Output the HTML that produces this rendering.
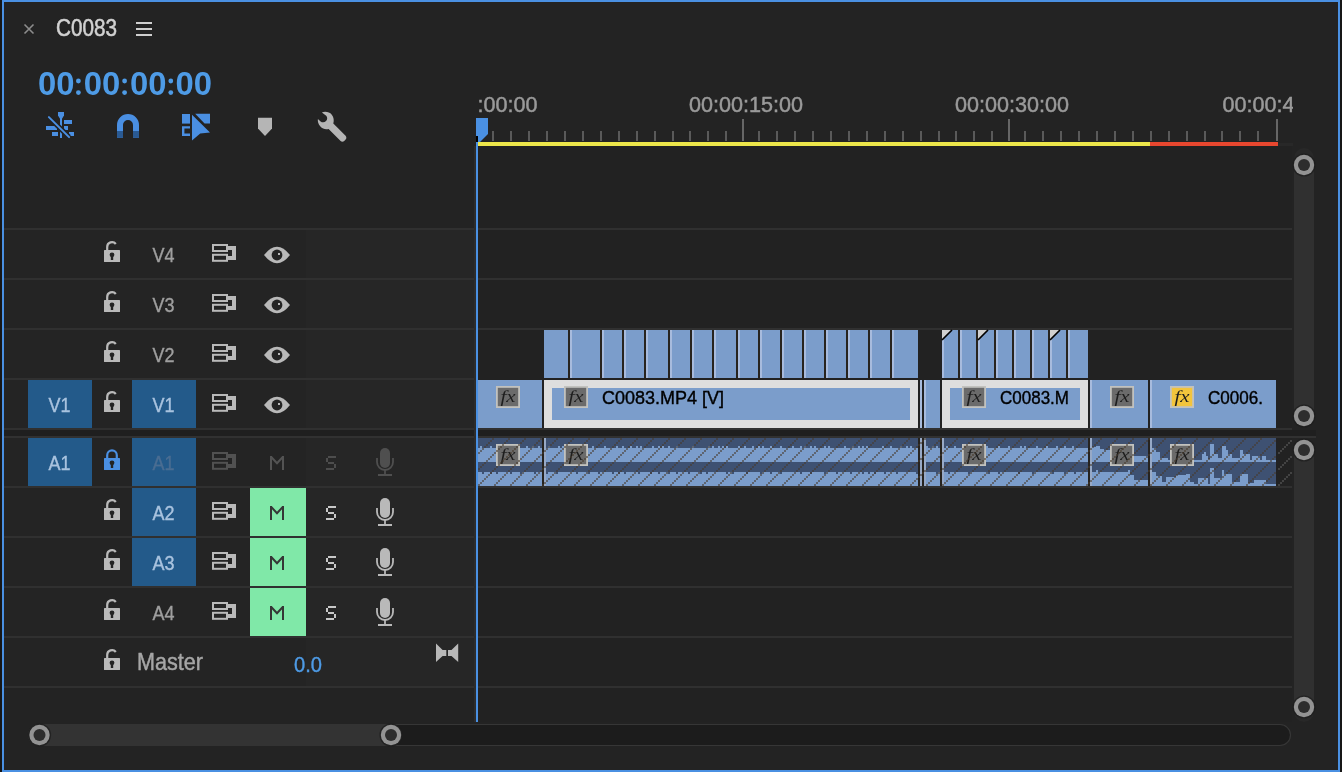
<!DOCTYPE html>
<html><head><meta charset="utf-8"><style>
html,body{margin:0;padding:0;background:#161616;overflow:hidden;}
svg{display:block;font-family:"Liberation Sans", sans-serif;will-change:transform;}
</style></head><body>
<svg width="1342" height="772" viewBox="0 0 1342 772" font-family='"Liberation Sans", sans-serif'>
<rect x="0" y="0" width="1342" height="772" fill="#161616"/>
<rect x="2" y="0" width="1338" height="772" fill="#4a90e2"/>
<rect x="4" y="2" width="1334" height="768" fill="#232323"/>
<path d="M24.5 24.5 L33.5 33.5 M33.5 24.5 L24.5 33.5" stroke="#8c8c8c" stroke-width="1.6"/>
<text x="56" y="36.3" font-size="23.5" fill="#d2d2d2" stroke="#d2d2d2" stroke-width="0.55" textLength="61" lengthAdjust="spacingAndGlyphs">C0083</text>
<rect x="136" y="22" width="16" height="2" fill="#cfcfcf"/>
<rect x="136" y="28" width="16" height="2" fill="#cfcfcf"/>
<rect x="136" y="34" width="16" height="2" fill="#cfcfcf"/>
<text x="37.900000000000006" y="95.4" font-size="32.6" font-weight="bold" fill="#4e9be6" textLength="36.5" lengthAdjust="spacingAndGlyphs">00</text>
<text x="83.8" y="95.4" font-size="32.6" font-weight="bold" fill="#4e9be6" textLength="36.5" lengthAdjust="spacingAndGlyphs">00</text>
<text x="130.0" y="95.4" font-size="32.6" font-weight="bold" fill="#4e9be6" textLength="36.5" lengthAdjust="spacingAndGlyphs">00</text>
<text x="175.5" y="95.4" font-size="32.6" font-weight="bold" fill="#4e9be6" textLength="36.5" lengthAdjust="spacingAndGlyphs">00</text>
<circle cx="78.4" cy="81" r="2.4" fill="#4e9be6"/><circle cx="78.4" cy="92.6" r="2.4" fill="#4e9be6"/>
<circle cx="124.6" cy="81" r="2.4" fill="#4e9be6"/><circle cx="124.6" cy="92.6" r="2.4" fill="#4e9be6"/>
<circle cx="170.8" cy="81" r="2.4" fill="#4e9be6"/><circle cx="170.8" cy="92.6" r="2.4" fill="#4e9be6"/>
<g fill="#4a8fe2">
<rect x="58" y="112" width="6" height="4"/>
<rect x="60" y="115" width="2" height="23"/>
<path d="M58 115.6 H64 L62.2 118.6 H59.8 Z"/>
<rect x="64" y="120" width="8" height="4"/>
<rect x="46" y="126" width="11" height="4"/>
<rect x="64" y="126" width="4" height="4"/>
<rect x="52" y="132" width="6" height="4"/>
<rect x="69" y="132" width="5" height="4"/>
</g>
<path d="M48.9 117.1 L69.1 137.1" stroke="#232323" stroke-width="5"/>
<path d="M48.9 117.1 L69.1 137.1" stroke="#4a8fe2" stroke-width="2" stroke-linecap="round"/>
<path d="M117 137.8 V125 A11 11 0 0 1 139 125 V137.8 H133 V125 A5 5 0 0 0 123 125 V137.8 Z" fill="#4a8fe2"/>
<rect x="117" y="131" width="6" height="6.8" fill="#2a5a93"/>
<rect x="133" y="131" width="6" height="6.8" fill="#2a5a93"/>
<rect x="182" y="114" width="8" height="9.6" fill="#4a8fe2"/>
<path d="M182 126.2 H190 V128.5 H184.4 V133.6 H190 V136 H182 Z" fill="#4a8fe2"/>
<path d="M195.2 113.8 H210 V123.6 H204.6 Z" fill="#4a8fe2"/>
<path d="M192 114.8 L210 132.5 L200.2 133.4 L192 140.6 Z" fill="#4a8fe2"/>
<path d="M258 117.7 H272 V128.5 L265 135.9 L258 128.5 Z" fill="#b5b5b5"/>
<path d="M321.9 112.4 C325 111.3 329.5 111.8 331.8 114.8 C333.8 117.4 334.2 120.8 333.3 123.6 L345.6 135.8 C346.6 136.8 346.6 138.6 345.6 139.6 L344.2 141 C343.2 142 341.6 142 340.6 141 L328.6 128.9 C325.8 129.8 322.6 129 320.4 126.6 C318.3 124.4 317.5 121.6 317.9 119.1 L320.6 121.4 C322.2 122.7 324.6 122.6 326 121.1 C327.5 119.6 327.6 117.2 326.2 115.7 Z" fill="#b5b5b5"/>
<defs><clipPath id="rc"><rect x="477" y="80" width="816" height="40"/></clipPath></defs>
<g clip-path="url(#rc)" font-size="22.6" fill="#9a9a9a" stroke="#9a9a9a" stroke-width="0.5">
<text x="423.5" y="112.2" textLength="114" lengthAdjust="spacingAndGlyphs">00:00:00:00</text>
<text x="689.0" y="112.2" textLength="114" lengthAdjust="spacingAndGlyphs">00:00:15:00</text>
<text x="955.0" y="112.2" textLength="114" lengthAdjust="spacingAndGlyphs">00:00:30:00</text>
<text x="1222.5" y="112.2" textLength="114" lengthAdjust="spacingAndGlyphs">00:00:45:00</text>
</g>
<rect x="492" y="131" width="2" height="10" fill="#5a5a5a"/>
<rect x="510" y="131" width="2" height="10" fill="#5a5a5a"/>
<rect x="528" y="131" width="2" height="10" fill="#5a5a5a"/>
<rect x="546" y="131" width="2" height="10" fill="#5a5a5a"/>
<rect x="564" y="131" width="2" height="10" fill="#5a5a5a"/>
<rect x="582" y="131" width="2" height="10" fill="#5a5a5a"/>
<rect x="600" y="131" width="2" height="10" fill="#5a5a5a"/>
<rect x="618" y="131" width="2" height="10" fill="#5a5a5a"/>
<rect x="636" y="131" width="2" height="10" fill="#5a5a5a"/>
<rect x="654" y="131" width="2" height="10" fill="#5a5a5a"/>
<rect x="672" y="131" width="2" height="10" fill="#5a5a5a"/>
<rect x="689" y="131" width="2" height="10" fill="#5a5a5a"/>
<rect x="707" y="131" width="2" height="10" fill="#5a5a5a"/>
<rect x="725" y="131" width="2" height="10" fill="#5a5a5a"/>
<rect x="742" y="119" width="2" height="22" fill="#666"/>
<rect x="758" y="131" width="2" height="10" fill="#5a5a5a"/>
<rect x="776" y="131" width="2" height="10" fill="#5a5a5a"/>
<rect x="794" y="131" width="2" height="10" fill="#5a5a5a"/>
<rect x="812" y="131" width="2" height="10" fill="#5a5a5a"/>
<rect x="830" y="131" width="2" height="10" fill="#5a5a5a"/>
<rect x="848" y="131" width="2" height="10" fill="#5a5a5a"/>
<rect x="866" y="131" width="2" height="10" fill="#5a5a5a"/>
<rect x="884" y="131" width="2" height="10" fill="#5a5a5a"/>
<rect x="902" y="131" width="2" height="10" fill="#5a5a5a"/>
<rect x="920" y="131" width="2" height="10" fill="#5a5a5a"/>
<rect x="938" y="131" width="2" height="10" fill="#5a5a5a"/>
<rect x="955" y="131" width="2" height="10" fill="#5a5a5a"/>
<rect x="973" y="131" width="2" height="10" fill="#5a5a5a"/>
<rect x="991" y="131" width="2" height="10" fill="#5a5a5a"/>
<rect x="1008" y="119" width="2" height="22" fill="#666"/>
<rect x="1024" y="131" width="2" height="10" fill="#5a5a5a"/>
<rect x="1042" y="131" width="2" height="10" fill="#5a5a5a"/>
<rect x="1060" y="131" width="2" height="10" fill="#5a5a5a"/>
<rect x="1078" y="131" width="2" height="10" fill="#5a5a5a"/>
<rect x="1096" y="131" width="2" height="10" fill="#5a5a5a"/>
<rect x="1114" y="131" width="2" height="10" fill="#5a5a5a"/>
<rect x="1132" y="131" width="2" height="10" fill="#5a5a5a"/>
<rect x="1150" y="131" width="2" height="10" fill="#5a5a5a"/>
<rect x="1168" y="131" width="2" height="10" fill="#5a5a5a"/>
<rect x="1186" y="131" width="2" height="10" fill="#5a5a5a"/>
<rect x="1204" y="131" width="2" height="10" fill="#5a5a5a"/>
<rect x="1221" y="131" width="2" height="10" fill="#5a5a5a"/>
<rect x="1239" y="131" width="2" height="10" fill="#5a5a5a"/>
<rect x="1257" y="131" width="2" height="10" fill="#5a5a5a"/>
<rect x="1276" y="119" width="2" height="22" fill="#666"/>
<rect x="478" y="142" width="672" height="4" fill="#ede64a"/>
<rect x="1150" y="142" width="128" height="4" fill="#e8472f"/>
<rect x="1278" y="143" width="15" height="3" fill="#282828"/>
<rect x="478" y="146" width="814" height="576" fill="#222222"/>
<rect x="4" y="230" width="470" height="48" fill="#242424"/>
<rect x="306" y="230" width="168" height="48" fill="#262626"/>
<rect x="4" y="280" width="470" height="48" fill="#242424"/>
<rect x="306" y="280" width="168" height="48" fill="#262626"/>
<rect x="4" y="330" width="470" height="48" fill="#242424"/>
<rect x="306" y="330" width="168" height="48" fill="#262626"/>
<rect x="4" y="380" width="470" height="48" fill="#242424"/>
<rect x="306" y="380" width="168" height="48" fill="#262626"/>
<rect x="4" y="438" width="470" height="48" fill="#242424"/>
<rect x="306" y="438" width="168" height="48" fill="#262626"/>
<rect x="4" y="488" width="470" height="48" fill="#242424"/>
<rect x="306" y="488" width="168" height="48" fill="#262626"/>
<rect x="4" y="538" width="470" height="48" fill="#242424"/>
<rect x="306" y="538" width="168" height="48" fill="#262626"/>
<rect x="4" y="588" width="470" height="48" fill="#242424"/>
<rect x="306" y="588" width="168" height="48" fill="#262626"/>
<rect x="4" y="638" width="470" height="48" fill="#242424"/>
<rect x="306" y="638" width="168" height="48" fill="#262626"/>
<rect x="4" y="228" width="1288" height="2" fill="#303030"/>
<rect x="4" y="278" width="1288" height="2" fill="#303030"/>
<rect x="4" y="328" width="1288" height="2" fill="#303030"/>
<rect x="4" y="378" width="1288" height="2" fill="#303030"/>
<rect x="4" y="428" width="1288" height="2" fill="#303030"/>
<rect x="4" y="436" width="1288" height="2" fill="#303030"/>
<rect x="4" y="486" width="1288" height="2" fill="#303030"/>
<rect x="4" y="536" width="1288" height="2" fill="#303030"/>
<rect x="4" y="586" width="1288" height="2" fill="#303030"/>
<rect x="4" y="636" width="1288" height="2" fill="#303030"/>
<rect x="4" y="686" width="1288" height="2" fill="#303030"/>
<rect x="4" y="430" width="1312" height="6" fill="#1f1f1f"/>
<rect x="4" y="436" width="1312" height="2" fill="#313131"/>
<g><rect x="104" y="250" width="16" height="12" rx="0.5" fill="#b9b9b9"/><path d="M107.2 250 V247 A4.8 4.8 0 0 1 115.8 244" stroke="#b9b9b9" stroke-width="2.2" fill="none"/><circle cx="112" cy="254.8" r="2.4" fill="#232323"/><rect x="110.8" y="255" width="2.4" height="5" fill="#232323"/></g>
<text x="152.5" y="262" font-size="19.5" fill="#9f9f9f" stroke="#9f9f9f" stroke-width="0.35" textLength="22" lengthAdjust="spacingAndGlyphs">V4</text>
<g fill="none" stroke="#b9b9b9" stroke-width="2"><rect x="213" y="245" width="14" height="6"/><rect x="213" y="254.8" width="14" height="6"/></g><path d="M228 246 H236 V260 H228 V256 H232 V250 H228 Z" fill="#b9b9b9"/>
<path d="M264 255 Q277 238.5 290 255 Q277 271.5 264 255 Z" fill="#b9b9b9"/><circle cx="277" cy="255" r="5.4" fill="#232323"/><rect x="278" y="253" width="2" height="2" fill="#b9b9b9"/>
<g><rect x="104" y="300" width="16" height="12" rx="0.5" fill="#b9b9b9"/><path d="M107.2 300 V297 A4.8 4.8 0 0 1 115.8 294" stroke="#b9b9b9" stroke-width="2.2" fill="none"/><circle cx="112" cy="304.8" r="2.4" fill="#232323"/><rect x="110.8" y="305" width="2.4" height="5" fill="#232323"/></g>
<text x="152.5" y="312" font-size="19.5" fill="#9f9f9f" stroke="#9f9f9f" stroke-width="0.35" textLength="22" lengthAdjust="spacingAndGlyphs">V3</text>
<g fill="none" stroke="#b9b9b9" stroke-width="2"><rect x="213" y="295" width="14" height="6"/><rect x="213" y="304.8" width="14" height="6"/></g><path d="M228 296 H236 V310 H228 V306 H232 V300 H228 Z" fill="#b9b9b9"/>
<path d="M264 305 Q277 288.5 290 305 Q277 321.5 264 305 Z" fill="#b9b9b9"/><circle cx="277" cy="305" r="5.4" fill="#232323"/><rect x="278" y="303" width="2" height="2" fill="#b9b9b9"/>
<g><rect x="104" y="350" width="16" height="12" rx="0.5" fill="#b9b9b9"/><path d="M107.2 350 V347 A4.8 4.8 0 0 1 115.8 344" stroke="#b9b9b9" stroke-width="2.2" fill="none"/><circle cx="112" cy="354.8" r="2.4" fill="#232323"/><rect x="110.8" y="355" width="2.4" height="5" fill="#232323"/></g>
<text x="152.5" y="362" font-size="19.5" fill="#9f9f9f" stroke="#9f9f9f" stroke-width="0.35" textLength="22" lengthAdjust="spacingAndGlyphs">V2</text>
<g fill="none" stroke="#b9b9b9" stroke-width="2"><rect x="213" y="345" width="14" height="6"/><rect x="213" y="354.8" width="14" height="6"/></g><path d="M228 346 H236 V360 H228 V356 H232 V350 H228 Z" fill="#b9b9b9"/>
<path d="M264 355 Q277 338.5 290 355 Q277 371.5 264 355 Z" fill="#b9b9b9"/><circle cx="277" cy="355" r="5.4" fill="#232323"/><rect x="278" y="353" width="2" height="2" fill="#b9b9b9"/>
<rect x="28" y="380" width="64" height="48" fill="#235a8a"/>
<rect x="132" y="380" width="64" height="48" fill="#235a8a"/>
<text x="48.5" y="412" font-size="19.5" fill="#a9c3df" stroke="#a9c3df" stroke-width="0.35" textLength="22" lengthAdjust="spacingAndGlyphs">V1</text>
<g><rect x="104" y="400" width="16" height="12" rx="0.5" fill="#b9b9b9"/><path d="M107.2 400 V397 A4.8 4.8 0 0 1 115.8 394" stroke="#b9b9b9" stroke-width="2.2" fill="none"/><circle cx="112" cy="404.8" r="2.4" fill="#232323"/><rect x="110.8" y="405" width="2.4" height="5" fill="#232323"/></g>
<text x="152.5" y="412" font-size="19.5" fill="#a9c3df" stroke="#a9c3df" stroke-width="0.35" textLength="22" lengthAdjust="spacingAndGlyphs">V1</text>
<g fill="none" stroke="#b9b9b9" stroke-width="2"><rect x="213" y="395" width="14" height="6"/><rect x="213" y="404.8" width="14" height="6"/></g><path d="M228 396 H236 V410 H228 V406 H232 V400 H228 Z" fill="#b9b9b9"/>
<path d="M264 405 Q277 388.5 290 405 Q277 421.5 264 405 Z" fill="#b9b9b9"/><circle cx="277" cy="405" r="5.4" fill="#232323"/><rect x="278" y="403" width="2" height="2" fill="#b9b9b9"/>
<rect x="28" y="438" width="64" height="48" fill="#235a8a"/>
<rect x="132" y="438" width="64" height="48" fill="#235a8a"/>
<text x="48.5" y="470" font-size="19.5" fill="#a9c3df" stroke="#a9c3df" stroke-width="0.35" textLength="22" lengthAdjust="spacingAndGlyphs">A1</text>
<g><rect x="104" y="458" width="16" height="12" rx="0.5" fill="#4a8fe2"/><path d="M107.2 458 V455.2 A4.8 4.8 0 0 1 116.8 455.2 V458" stroke="#4a8fe2" stroke-width="2.2" fill="none"/><circle cx="112" cy="462.8" r="2.4" fill="#232323"/><rect x="110.8" y="463" width="2.4" height="5" fill="#232323"/></g>
<text x="152.5" y="470" font-size="19.5" fill="#4a6d92" stroke="#4a6d92" stroke-width="0.35" textLength="22" lengthAdjust="spacingAndGlyphs">A1</text>
<g fill="none" stroke="#515151" stroke-width="2"><rect x="213" y="453" width="14" height="6"/><rect x="213" y="462.8" width="14" height="6"/></g><path d="M228 454 H236 V468 H228 V464 H232 V458 H228 Z" fill="#515151"/>
<rect x="270" y="456" width="2" height="14" fill="#535353"/><rect x="282" y="456" width="2" height="14" fill="#535353"/><path d="M271 456.7 L277 463.2 L283 456.7" stroke="#535353" stroke-width="2" fill="none"/>
<g fill="#4d4d4d"><rect x="328" y="456" width="8" height="2"/><rect x="326" y="458" width="2" height="4"/><rect x="328" y="462" width="6" height="2"/><rect x="334" y="464" width="2" height="4"/><rect x="326" y="468" width="8" height="2"/></g>
<rect x="380" y="448" width="10" height="20" rx="5" fill="#4f4f4f"/><path d="M377 458 V462 A8 8 0 0 0 393 462 V458" stroke="#4f4f4f" stroke-width="1.8" fill="none"/><rect x="384.1" y="469" width="1.8" height="5" fill="#4f4f4f"/><rect x="378" y="474" width="14" height="2" fill="#4f4f4f"/>
<g><rect x="104" y="508" width="16" height="12" rx="0.5" fill="#b9b9b9"/><path d="M107.2 508 V505 A4.8 4.8 0 0 1 115.8 502" stroke="#b9b9b9" stroke-width="2.2" fill="none"/><circle cx="112" cy="512.8" r="2.4" fill="#232323"/><rect x="110.8" y="513" width="2.4" height="5" fill="#232323"/></g>
<rect x="132" y="488" width="64" height="48" fill="#235a8a"/>
<text x="152.5" y="520" font-size="19.5" fill="#a9c3df" stroke="#a9c3df" stroke-width="0.35" textLength="22" lengthAdjust="spacingAndGlyphs">A2</text>
<g fill="none" stroke="#b9b9b9" stroke-width="2"><rect x="213" y="503" width="14" height="6"/><rect x="213" y="512.8" width="14" height="6"/></g><path d="M228 504 H236 V518 H228 V514 H232 V508 H228 Z" fill="#b9b9b9"/>
<rect x="250" y="488" width="56" height="48" fill="#80e8a8"/>
<rect x="270" y="506" width="2" height="14" fill="#363636"/><rect x="282" y="506" width="2" height="14" fill="#363636"/><path d="M271 506.7 L277 513.2 L283 506.7" stroke="#363636" stroke-width="2" fill="none"/>
<g fill="#c8c8c8"><rect x="328" y="506" width="8" height="2"/><rect x="326" y="508" width="2" height="4"/><rect x="328" y="512" width="6" height="2"/><rect x="334" y="514" width="2" height="4"/><rect x="326" y="518" width="8" height="2"/></g>
<rect x="380" y="498" width="10" height="20" rx="5" fill="#b9b9b9"/><path d="M377 508 V512 A8 8 0 0 0 393 512 V508" stroke="#b9b9b9" stroke-width="1.8" fill="none"/><rect x="384.1" y="519" width="1.8" height="5" fill="#b9b9b9"/><rect x="378" y="524" width="14" height="2" fill="#b9b9b9"/>
<g><rect x="104" y="558" width="16" height="12" rx="0.5" fill="#b9b9b9"/><path d="M107.2 558 V555 A4.8 4.8 0 0 1 115.8 552" stroke="#b9b9b9" stroke-width="2.2" fill="none"/><circle cx="112" cy="562.8" r="2.4" fill="#232323"/><rect x="110.8" y="563" width="2.4" height="5" fill="#232323"/></g>
<rect x="132" y="538" width="64" height="48" fill="#235a8a"/>
<text x="152.5" y="570" font-size="19.5" fill="#a9c3df" stroke="#a9c3df" stroke-width="0.35" textLength="22" lengthAdjust="spacingAndGlyphs">A3</text>
<g fill="none" stroke="#b9b9b9" stroke-width="2"><rect x="213" y="553" width="14" height="6"/><rect x="213" y="562.8" width="14" height="6"/></g><path d="M228 554 H236 V568 H228 V564 H232 V558 H228 Z" fill="#b9b9b9"/>
<rect x="250" y="538" width="56" height="48" fill="#80e8a8"/>
<rect x="270" y="556" width="2" height="14" fill="#363636"/><rect x="282" y="556" width="2" height="14" fill="#363636"/><path d="M271 556.7 L277 563.2 L283 556.7" stroke="#363636" stroke-width="2" fill="none"/>
<g fill="#c8c8c8"><rect x="328" y="556" width="8" height="2"/><rect x="326" y="558" width="2" height="4"/><rect x="328" y="562" width="6" height="2"/><rect x="334" y="564" width="2" height="4"/><rect x="326" y="568" width="8" height="2"/></g>
<rect x="380" y="548" width="10" height="20" rx="5" fill="#b9b9b9"/><path d="M377 558 V562 A8 8 0 0 0 393 562 V558" stroke="#b9b9b9" stroke-width="1.8" fill="none"/><rect x="384.1" y="569" width="1.8" height="5" fill="#b9b9b9"/><rect x="378" y="574" width="14" height="2" fill="#b9b9b9"/>
<g><rect x="104" y="608" width="16" height="12" rx="0.5" fill="#b9b9b9"/><path d="M107.2 608 V605 A4.8 4.8 0 0 1 115.8 602" stroke="#b9b9b9" stroke-width="2.2" fill="none"/><circle cx="112" cy="612.8" r="2.4" fill="#232323"/><rect x="110.8" y="613" width="2.4" height="5" fill="#232323"/></g>
<text x="152.5" y="620" font-size="19.5" fill="#9f9f9f" stroke="#9f9f9f" stroke-width="0.35" textLength="22" lengthAdjust="spacingAndGlyphs">A4</text>
<g fill="none" stroke="#b9b9b9" stroke-width="2"><rect x="213" y="603" width="14" height="6"/><rect x="213" y="612.8" width="14" height="6"/></g><path d="M228 604 H236 V618 H228 V614 H232 V608 H228 Z" fill="#b9b9b9"/>
<rect x="250" y="588" width="56" height="48" fill="#80e8a8"/>
<rect x="270" y="606" width="2" height="14" fill="#363636"/><rect x="282" y="606" width="2" height="14" fill="#363636"/><path d="M271 606.7 L277 613.2 L283 606.7" stroke="#363636" stroke-width="2" fill="none"/>
<g fill="#c8c8c8"><rect x="328" y="606" width="8" height="2"/><rect x="326" y="608" width="2" height="4"/><rect x="328" y="612" width="6" height="2"/><rect x="334" y="614" width="2" height="4"/><rect x="326" y="618" width="8" height="2"/></g>
<rect x="380" y="598" width="10" height="20" rx="5" fill="#b9b9b9"/><path d="M377 608 V612 A8 8 0 0 0 393 612 V608" stroke="#b9b9b9" stroke-width="1.8" fill="none"/><rect x="384.1" y="619" width="1.8" height="5" fill="#b9b9b9"/><rect x="378" y="624" width="14" height="2" fill="#b9b9b9"/>
<g><rect x="104" y="658" width="16" height="12" rx="0.5" fill="#b9b9b9"/><path d="M107.2 658 V655 A4.8 4.8 0 0 1 115.8 652" stroke="#b9b9b9" stroke-width="2.2" fill="none"/><circle cx="112" cy="662.8" r="2.4" fill="#232323"/><rect x="110.8" y="663" width="2.4" height="5" fill="#232323"/></g>
<text x="137" y="670" font-size="23.5" fill="#a6a6a6" stroke="#a6a6a6" stroke-width="0.45" textLength="66" lengthAdjust="spacingAndGlyphs">Master</text>
<text x="294" y="672" font-size="22" fill="#4e9be6" stroke="#4e9be6" stroke-width="0.4" textLength="28" lengthAdjust="spacingAndGlyphs">0.0</text>
<path d="M436 643.6 V662.1 L442.6 656.1 H446.3 V649.9 H442.6 Z M458.2 643.6 V662.1 L451.5 656.1 H448 V649.9 H451.5 Z" fill="#b8b8b8"/>
<rect x="544" y="330" width="24" height="48" fill="#7b9dcb"/>
<rect x="568" y="330" width="2" height="48" fill="#27241f"/>
<rect x="570" y="330" width="30" height="48" fill="#7b9dcb"/>
<rect x="570" y="330" width="2" height="48" fill="#a7bbdd"/>
<rect x="600" y="330" width="2" height="48" fill="#27241f"/>
<rect x="602" y="330" width="20" height="48" fill="#7b9dcb"/>
<rect x="602" y="330" width="2" height="48" fill="#a7bbdd"/>
<rect x="622" y="330" width="2" height="48" fill="#27241f"/>
<rect x="624" y="330" width="20" height="48" fill="#7b9dcb"/>
<rect x="624" y="330" width="2" height="48" fill="#a7bbdd"/>
<rect x="644" y="330" width="2" height="48" fill="#27241f"/>
<rect x="646" y="330" width="22" height="48" fill="#7b9dcb"/>
<rect x="646" y="330" width="2" height="48" fill="#a7bbdd"/>
<rect x="668" y="330" width="2" height="48" fill="#27241f"/>
<rect x="670" y="330" width="20" height="48" fill="#7b9dcb"/>
<rect x="670" y="330" width="2" height="48" fill="#a7bbdd"/>
<rect x="690" y="330" width="2" height="48" fill="#27241f"/>
<rect x="692" y="330" width="20" height="48" fill="#7b9dcb"/>
<rect x="692" y="330" width="2" height="48" fill="#a7bbdd"/>
<rect x="712" y="330" width="2" height="48" fill="#27241f"/>
<rect x="714" y="330" width="22" height="48" fill="#7b9dcb"/>
<rect x="714" y="330" width="2" height="48" fill="#a7bbdd"/>
<rect x="736" y="330" width="2" height="48" fill="#27241f"/>
<rect x="738" y="330" width="20" height="48" fill="#7b9dcb"/>
<rect x="738" y="330" width="2" height="48" fill="#a7bbdd"/>
<rect x="758" y="330" width="2" height="48" fill="#27241f"/>
<rect x="760" y="330" width="20" height="48" fill="#7b9dcb"/>
<rect x="760" y="330" width="2" height="48" fill="#a7bbdd"/>
<rect x="780" y="330" width="2" height="48" fill="#27241f"/>
<rect x="782" y="330" width="20" height="48" fill="#7b9dcb"/>
<rect x="782" y="330" width="2" height="48" fill="#a7bbdd"/>
<rect x="802" y="330" width="2" height="48" fill="#27241f"/>
<rect x="804" y="330" width="20" height="48" fill="#7b9dcb"/>
<rect x="804" y="330" width="2" height="48" fill="#a7bbdd"/>
<rect x="824" y="330" width="2" height="48" fill="#27241f"/>
<rect x="826" y="330" width="20" height="48" fill="#7b9dcb"/>
<rect x="826" y="330" width="2" height="48" fill="#a7bbdd"/>
<rect x="846" y="330" width="2" height="48" fill="#27241f"/>
<rect x="848" y="330" width="20" height="48" fill="#7b9dcb"/>
<rect x="848" y="330" width="2" height="48" fill="#a7bbdd"/>
<rect x="868" y="330" width="2" height="48" fill="#27241f"/>
<rect x="870" y="330" width="20" height="48" fill="#7b9dcb"/>
<rect x="870" y="330" width="2" height="48" fill="#a7bbdd"/>
<rect x="890" y="330" width="2" height="48" fill="#27241f"/>
<rect x="892" y="330" width="26" height="48" fill="#7b9dcb"/>
<rect x="892" y="330" width="2" height="48" fill="#a7bbdd"/>
<rect x="942" y="330" width="16" height="48" fill="#7b9dcb"/>
<rect x="942" y="330" width="2" height="48" fill="#a7bbdd"/>
<rect x="958" y="330" width="2" height="48" fill="#27241f"/>
<rect x="960" y="330" width="16" height="48" fill="#7b9dcb"/>
<rect x="960" y="330" width="2" height="48" fill="#a7bbdd"/>
<rect x="976" y="330" width="2" height="48" fill="#27241f"/>
<rect x="978" y="330" width="16" height="48" fill="#7b9dcb"/>
<rect x="978" y="330" width="2" height="48" fill="#a7bbdd"/>
<rect x="994" y="330" width="2" height="48" fill="#27241f"/>
<rect x="996" y="330" width="16" height="48" fill="#7b9dcb"/>
<rect x="996" y="330" width="2" height="48" fill="#a7bbdd"/>
<rect x="1012" y="330" width="2" height="48" fill="#27241f"/>
<rect x="1014" y="330" width="16" height="48" fill="#7b9dcb"/>
<rect x="1014" y="330" width="2" height="48" fill="#a7bbdd"/>
<rect x="1030" y="330" width="2" height="48" fill="#27241f"/>
<rect x="1032" y="330" width="16" height="48" fill="#7b9dcb"/>
<rect x="1032" y="330" width="2" height="48" fill="#a7bbdd"/>
<rect x="1048" y="330" width="2" height="48" fill="#27241f"/>
<rect x="1050" y="330" width="16" height="48" fill="#7b9dcb"/>
<rect x="1050" y="330" width="2" height="48" fill="#a7bbdd"/>
<rect x="1066" y="330" width="2" height="48" fill="#27241f"/>
<rect x="1068" y="330" width="20" height="48" fill="#7b9dcb"/>
<rect x="1068" y="330" width="2" height="48" fill="#a7bbdd"/>
<path d="M942 330 H951.8 L942 339.8 Z" fill="#d0d0d0"/>
<path d="M942 340 L952 330" stroke="#000" stroke-width="1.7"/>
<path d="M978 330 H987.8 L978 339.8 Z" fill="#d0d0d0"/>
<path d="M978 340 L988 330" stroke="#000" stroke-width="1.7"/>
<path d="M1050 330 H1059.8 L1050 339.8 Z" fill="#d0d0d0"/>
<path d="M1050 340 L1060 330" stroke="#000" stroke-width="1.7"/>
<rect x="478" y="378" width="814" height="2" fill="#222"/>
<rect x="478" y="380" width="64" height="48" fill="#7b9dcb"/>
<rect x="496.9" y="386.9" width="22.2" height="20.2" fill="#6b6b6b" stroke="#c2c2be" stroke-width="1.8"/><text x="500.5" y="401.7" font-family="Liberation Serif" font-size="16" font-style="italic" fill="#1e1e1e" textLength="15" lengthAdjust="spacingAndGlyphs">fx</text>
<rect x="544" y="380" width="374" height="48" fill="#dedede"/>
<rect x="552" y="388" width="358" height="32" fill="#7b9dcb"/>
<rect x="564.9" y="386.9" width="22.2" height="20.2" fill="#6b6b6b" stroke="#c2c2be" stroke-width="1.8"/><text x="568.5" y="401.7" font-family="Liberation Serif" font-size="16" font-style="italic" fill="#1e1e1e" textLength="15" lengthAdjust="spacingAndGlyphs">fx</text>
<text x="602" y="404" font-size="19" fill="#000" stroke="#000" stroke-width="0.4" textLength="122" lengthAdjust="spacingAndGlyphs">C0083.MP4 [V]</text>
<rect x="920" y="380" width="2" height="48" fill="#a7bbdd"/>
<rect x="924" y="380" width="16" height="48" fill="#7b9dcb"/>
<rect x="924" y="380" width="2" height="48" fill="#a7bbdd"/>
<rect x="942" y="380" width="146" height="48" fill="#dedede"/>
<rect x="950" y="388" width="130" height="32" fill="#7b9dcb"/>
<rect x="962.9" y="386.9" width="22.2" height="20.2" fill="#6b6b6b" stroke="#c2c2be" stroke-width="1.8"/><text x="966.5" y="401.7" font-family="Liberation Serif" font-size="16" font-style="italic" fill="#1e1e1e" textLength="15" lengthAdjust="spacingAndGlyphs">fx</text>
<text x="1000" y="404" font-size="19" fill="#000" stroke="#000" stroke-width="0.4" textLength="69" lengthAdjust="spacingAndGlyphs">C0083.M</text>
<rect x="1090" y="380" width="58" height="48" fill="#7b9dcb"/>
<rect x="1090" y="380" width="2" height="48" fill="#a7bbdd"/>
<rect x="1110.9" y="386.9" width="22.2" height="20.2" fill="#6b6b6b" stroke="#c2c2be" stroke-width="1.8"/><text x="1114.5" y="401.7" font-family="Liberation Serif" font-size="16" font-style="italic" fill="#1e1e1e" textLength="15" lengthAdjust="spacingAndGlyphs">fx</text>
<rect x="1150" y="380" width="126" height="48" fill="#7b9dcb"/>
<rect x="1150" y="380" width="2" height="48" fill="#a7bbdd"/>
<rect x="1170.9" y="386.9" width="22.2" height="20.2" fill="#f2c43c" stroke="#c2c2be" stroke-width="1.8"/><text x="1174.5" y="401.7" font-family="Liberation Serif" font-size="16" font-style="italic" fill="#1e1e1e" textLength="15" lengthAdjust="spacingAndGlyphs">fx</text>
<text x="1208" y="404" font-size="19" fill="#000" stroke="#000" stroke-width="0.4" textLength="55" lengthAdjust="spacingAndGlyphs">C0006.</text>
<defs><pattern id="hatch" patternUnits="userSpaceOnUse" x="4" y="0" width="16" height="16"><g fill="#46392c"><rect x="0.25" y="14.25" width="1.5" height="1.5"/><rect x="2.25" y="12.25" width="1.5" height="1.5"/><rect x="4.25" y="10.25" width="1.5" height="1.5"/><rect x="6.25" y="8.25" width="1.5" height="1.5"/><rect x="8.25" y="6.25" width="1.5" height="1.5"/><rect x="10.25" y="4.25" width="1.5" height="1.5"/><rect x="12.25" y="2.25" width="1.5" height="1.5"/><rect x="14.25" y="0.25" width="1.5" height="1.5"/></g></pattern><pattern id="hatch2" patternUnits="userSpaceOnUse" x="4" y="0" width="16" height="16"><g fill="#5c5c5c"><rect x="0.25" y="14.25" width="1.5" height="1.5"/><rect x="2.25" y="12.25" width="1.5" height="1.5"/><rect x="4.25" y="10.25" width="1.5" height="1.5"/><rect x="6.25" y="8.25" width="1.5" height="1.5"/><rect x="8.25" y="6.25" width="1.5" height="1.5"/><rect x="10.25" y="4.25" width="1.5" height="1.5"/><rect x="12.25" y="2.25" width="1.5" height="1.5"/><rect x="14.25" y="0.25" width="1.5" height="1.5"/></g></pattern></defs>
<rect x="478" y="438" width="798" height="48" fill="#3e5172"/>
<rect x="478" y="448" width="614" height="14" fill="#7b9dcb"/>
<rect x="478" y="472" width="614" height="14" fill="#7b9dcb"/>
<rect x="480" y="446" width="2" height="2" fill="#7b9dcb"/>
<rect x="490" y="446" width="2" height="2" fill="#7b9dcb"/>
<rect x="498" y="446" width="2" height="2" fill="#7b9dcb"/>
<rect x="510" y="446" width="2" height="2" fill="#7b9dcb"/>
<rect x="526" y="446" width="2" height="2" fill="#7b9dcb"/>
<rect x="532" y="446" width="2" height="2" fill="#7b9dcb"/>
<rect x="538" y="446" width="2" height="2" fill="#7b9dcb"/>
<rect x="542" y="446" width="2" height="2" fill="#7b9dcb"/>
<rect x="548" y="446" width="2" height="2" fill="#7b9dcb"/>
<rect x="558" y="446" width="2" height="2" fill="#7b9dcb"/>
<rect x="562" y="446" width="2" height="2" fill="#7b9dcb"/>
<rect x="568" y="446" width="2" height="2" fill="#7b9dcb"/>
<rect x="572" y="446" width="2" height="2" fill="#7b9dcb"/>
<rect x="580" y="446" width="2" height="2" fill="#7b9dcb"/>
<rect x="586" y="446" width="2" height="2" fill="#7b9dcb"/>
<rect x="592" y="446" width="2" height="2" fill="#7b9dcb"/>
<rect x="604" y="446" width="2" height="2" fill="#7b9dcb"/>
<rect x="616" y="446" width="2" height="2" fill="#7b9dcb"/>
<rect x="622" y="446" width="2" height="2" fill="#7b9dcb"/>
<rect x="630" y="446" width="2" height="2" fill="#7b9dcb"/>
<rect x="636" y="446" width="2" height="2" fill="#7b9dcb"/>
<rect x="640" y="446" width="2" height="2" fill="#7b9dcb"/>
<rect x="652" y="446" width="2" height="2" fill="#7b9dcb"/>
<rect x="658" y="446" width="2" height="2" fill="#7b9dcb"/>
<rect x="662" y="446" width="2" height="2" fill="#7b9dcb"/>
<rect x="668" y="446" width="2" height="2" fill="#7b9dcb"/>
<rect x="676" y="446" width="2" height="2" fill="#7b9dcb"/>
<rect x="692" y="446" width="2" height="2" fill="#7b9dcb"/>
<rect x="708" y="446" width="2" height="2" fill="#7b9dcb"/>
<rect x="712" y="446" width="2" height="2" fill="#7b9dcb"/>
<rect x="718" y="446" width="2" height="2" fill="#7b9dcb"/>
<rect x="722" y="446" width="2" height="2" fill="#7b9dcb"/>
<rect x="726" y="446" width="2" height="2" fill="#7b9dcb"/>
<rect x="738" y="446" width="2" height="2" fill="#7b9dcb"/>
<rect x="744" y="446" width="2" height="2" fill="#7b9dcb"/>
<rect x="752" y="446" width="2" height="2" fill="#7b9dcb"/>
<rect x="758" y="446" width="2" height="2" fill="#7b9dcb"/>
<rect x="762" y="446" width="2" height="2" fill="#7b9dcb"/>
<rect x="770" y="446" width="2" height="2" fill="#7b9dcb"/>
<rect x="780" y="446" width="2" height="2" fill="#7b9dcb"/>
<rect x="792" y="446" width="2" height="2" fill="#7b9dcb"/>
<rect x="800" y="446" width="2" height="2" fill="#7b9dcb"/>
<rect x="804" y="446" width="2" height="2" fill="#7b9dcb"/>
<rect x="810" y="446" width="2" height="2" fill="#7b9dcb"/>
<rect x="814" y="446" width="2" height="2" fill="#7b9dcb"/>
<rect x="824" y="446" width="2" height="2" fill="#7b9dcb"/>
<rect x="828" y="446" width="2" height="2" fill="#7b9dcb"/>
<rect x="844" y="446" width="2" height="2" fill="#7b9dcb"/>
<rect x="852" y="446" width="2" height="2" fill="#7b9dcb"/>
<rect x="858" y="446" width="2" height="2" fill="#7b9dcb"/>
<rect x="862" y="446" width="2" height="2" fill="#7b9dcb"/>
<rect x="866" y="446" width="2" height="2" fill="#7b9dcb"/>
<rect x="882" y="446" width="2" height="2" fill="#7b9dcb"/>
<rect x="890" y="446" width="2" height="2" fill="#7b9dcb"/>
<rect x="900" y="446" width="2" height="2" fill="#7b9dcb"/>
<rect x="906" y="446" width="2" height="2" fill="#7b9dcb"/>
<rect x="910" y="446" width="2" height="2" fill="#7b9dcb"/>
<rect x="926" y="446" width="2" height="2" fill="#7b9dcb"/>
<rect x="932" y="446" width="2" height="2" fill="#7b9dcb"/>
<rect x="936" y="446" width="2" height="2" fill="#7b9dcb"/>
<rect x="942" y="446" width="2" height="2" fill="#7b9dcb"/>
<rect x="946" y="446" width="2" height="2" fill="#7b9dcb"/>
<rect x="954" y="446" width="2" height="2" fill="#7b9dcb"/>
<rect x="966" y="446" width="2" height="2" fill="#7b9dcb"/>
<rect x="982" y="446" width="2" height="2" fill="#7b9dcb"/>
<rect x="986" y="446" width="2" height="2" fill="#7b9dcb"/>
<rect x="998" y="446" width="2" height="2" fill="#7b9dcb"/>
<rect x="1008" y="446" width="2" height="2" fill="#7b9dcb"/>
<rect x="1020" y="446" width="2" height="2" fill="#7b9dcb"/>
<rect x="1024" y="446" width="2" height="2" fill="#7b9dcb"/>
<rect x="1036" y="446" width="2" height="2" fill="#7b9dcb"/>
<rect x="1046" y="446" width="2" height="2" fill="#7b9dcb"/>
<rect x="1056" y="446" width="2" height="2" fill="#7b9dcb"/>
<rect x="1064" y="446" width="2" height="2" fill="#7b9dcb"/>
<rect x="1072" y="446" width="2" height="2" fill="#7b9dcb"/>
<rect x="482" y="472" width="2" height="2" fill="#3e5172"/>
<rect x="490" y="472" width="2" height="2" fill="#3e5172"/>
<rect x="496" y="472" width="2" height="2" fill="#3e5172"/>
<rect x="510" y="472" width="2" height="2" fill="#3e5172"/>
<rect x="520" y="472" width="2" height="2" fill="#3e5172"/>
<rect x="534" y="472" width="2" height="2" fill="#3e5172"/>
<rect x="546" y="472" width="2" height="2" fill="#3e5172"/>
<rect x="556" y="472" width="2" height="2" fill="#3e5172"/>
<rect x="576" y="472" width="2" height="2" fill="#3e5172"/>
<rect x="588" y="472" width="2" height="2" fill="#3e5172"/>
<rect x="598" y="472" width="2" height="2" fill="#3e5172"/>
<rect x="612" y="472" width="2" height="2" fill="#3e5172"/>
<rect x="618" y="472" width="2" height="2" fill="#3e5172"/>
<rect x="624" y="472" width="2" height="2" fill="#3e5172"/>
<rect x="638" y="472" width="2" height="2" fill="#3e5172"/>
<rect x="650" y="472" width="2" height="2" fill="#3e5172"/>
<rect x="658" y="472" width="2" height="2" fill="#3e5172"/>
<rect x="668" y="472" width="2" height="2" fill="#3e5172"/>
<rect x="676" y="472" width="2" height="2" fill="#3e5172"/>
<rect x="688" y="472" width="2" height="2" fill="#3e5172"/>
<rect x="700" y="472" width="2" height="2" fill="#3e5172"/>
<rect x="706" y="472" width="2" height="2" fill="#3e5172"/>
<rect x="726" y="472" width="2" height="2" fill="#3e5172"/>
<rect x="732" y="472" width="2" height="2" fill="#3e5172"/>
<rect x="746" y="472" width="2" height="2" fill="#3e5172"/>
<rect x="760" y="472" width="2" height="2" fill="#3e5172"/>
<rect x="770" y="472" width="2" height="2" fill="#3e5172"/>
<rect x="780" y="472" width="2" height="2" fill="#3e5172"/>
<rect x="800" y="472" width="2" height="2" fill="#3e5172"/>
<rect x="810" y="472" width="2" height="2" fill="#3e5172"/>
<rect x="824" y="472" width="2" height="2" fill="#3e5172"/>
<rect x="836" y="472" width="2" height="2" fill="#3e5172"/>
<rect x="850" y="472" width="2" height="2" fill="#3e5172"/>
<rect x="862" y="472" width="2" height="2" fill="#3e5172"/>
<rect x="868" y="472" width="2" height="2" fill="#3e5172"/>
<rect x="874" y="472" width="2" height="2" fill="#3e5172"/>
<rect x="884" y="472" width="2" height="2" fill="#3e5172"/>
<rect x="896" y="472" width="2" height="2" fill="#3e5172"/>
<rect x="916" y="472" width="2" height="2" fill="#3e5172"/>
<rect x="936" y="472" width="2" height="2" fill="#3e5172"/>
<rect x="942" y="472" width="2" height="2" fill="#3e5172"/>
<rect x="948" y="472" width="2" height="2" fill="#3e5172"/>
<rect x="968" y="472" width="2" height="2" fill="#3e5172"/>
<rect x="988" y="472" width="2" height="2" fill="#3e5172"/>
<rect x="998" y="472" width="2" height="2" fill="#3e5172"/>
<rect x="1018" y="472" width="2" height="2" fill="#3e5172"/>
<rect x="1032" y="472" width="2" height="2" fill="#3e5172"/>
<rect x="1052" y="472" width="2" height="2" fill="#3e5172"/>
<rect x="1064" y="472" width="2" height="2" fill="#3e5172"/>
<rect x="1074" y="472" width="2" height="2" fill="#3e5172"/>
<rect x="1092" y="447" width="4" height="15" fill="#7b9dcb"/>
<rect x="1096" y="446" width="4" height="16" fill="#7b9dcb"/>
<rect x="1100" y="449" width="4" height="13" fill="#7b9dcb"/>
<rect x="1104" y="450" width="6" height="12" fill="#7b9dcb"/>
<rect x="1110" y="454" width="24" height="8" fill="#7b9dcb"/>
<rect x="1134" y="456" width="14" height="6" fill="#7b9dcb"/>
<rect x="1152" y="448" width="4" height="14" fill="#7b9dcb"/>
<rect x="1156" y="452" width="4" height="10" fill="#7b9dcb"/>
<rect x="1160" y="458" width="8" height="4" fill="#7b9dcb"/>
<rect x="1168" y="460" width="26" height="2" fill="#7b9dcb"/>
<rect x="1194" y="460" width="8" height="2" fill="#7b9dcb"/>
<rect x="1202" y="454" width="2" height="8" fill="#7b9dcb"/>
<rect x="1204" y="452" width="2" height="10" fill="#7b9dcb"/>
<rect x="1206" y="456" width="2" height="6" fill="#7b9dcb"/>
<rect x="1208" y="459" width="2" height="3" fill="#7b9dcb"/>
<rect x="1210" y="444" width="4" height="18" fill="#7b9dcb"/>
<rect x="1214" y="454" width="4" height="8" fill="#7b9dcb"/>
<rect x="1218" y="458" width="4" height="4" fill="#7b9dcb"/>
<rect x="1222" y="446" width="4" height="16" fill="#7b9dcb"/>
<rect x="1226" y="450" width="2" height="12" fill="#7b9dcb"/>
<rect x="1228" y="454" width="4" height="8" fill="#7b9dcb"/>
<rect x="1232" y="458" width="8" height="4" fill="#7b9dcb"/>
<rect x="1240" y="450" width="3" height="12" fill="#7b9dcb"/>
<rect x="1243" y="454" width="7" height="8" fill="#7b9dcb"/>
<rect x="1250" y="460" width="2" height="2" fill="#7b9dcb"/>
<rect x="1252" y="456" width="8" height="6" fill="#7b9dcb"/>
<rect x="1260" y="460" width="2" height="2" fill="#7b9dcb"/>
<rect x="1262" y="456" width="4" height="6" fill="#7b9dcb"/>
<rect x="1266" y="460" width="10" height="2" fill="#7b9dcb"/>
<rect x="1092" y="472" width="4" height="14" fill="#7b9dcb"/>
<rect x="1096" y="470" width="2" height="16" fill="#7b9dcb"/>
<rect x="1098" y="472" width="30" height="14" fill="#7b9dcb"/>
<rect x="1128" y="470" width="2" height="16" fill="#7b9dcb"/>
<rect x="1130" y="475" width="4" height="11" fill="#7b9dcb"/>
<rect x="1134" y="480" width="14" height="6" fill="#7b9dcb"/>
<rect x="1152" y="472" width="4" height="14" fill="#7b9dcb"/>
<rect x="1156" y="476" width="6" height="10" fill="#7b9dcb"/>
<rect x="1162" y="482" width="4" height="4" fill="#7b9dcb"/>
<rect x="1166" y="477" width="10" height="9" fill="#7b9dcb"/>
<rect x="1176" y="475" width="10" height="11" fill="#7b9dcb"/>
<rect x="1186" y="474" width="4" height="12" fill="#7b9dcb"/>
<rect x="1190" y="482" width="4" height="4" fill="#7b9dcb"/>
<rect x="1194" y="484" width="4" height="2" fill="#7b9dcb"/>
<rect x="1198" y="478" width="10" height="8" fill="#7b9dcb"/>
<rect x="1208" y="484" width="2" height="2" fill="#7b9dcb"/>
<rect x="1210" y="468" width="4" height="18" fill="#7b9dcb"/>
<rect x="1214" y="478" width="8" height="8" fill="#7b9dcb"/>
<rect x="1222" y="470" width="2" height="16" fill="#7b9dcb"/>
<rect x="1224" y="474" width="8" height="12" fill="#7b9dcb"/>
<rect x="1232" y="482" width="8" height="4" fill="#7b9dcb"/>
<rect x="1240" y="474" width="8" height="12" fill="#7b9dcb"/>
<rect x="1248" y="483" width="6" height="3" fill="#7b9dcb"/>
<rect x="1254" y="480" width="12" height="6" fill="#7b9dcb"/>
<rect x="1266" y="484" width="10" height="2" fill="#7b9dcb"/>
<rect x="542" y="438" width="2" height="48" fill="#26231f"/>
<rect x="918" y="438" width="2" height="48" fill="#26231f"/>
<rect x="922" y="438" width="2" height="48" fill="#26231f"/>
<rect x="940" y="438" width="2" height="48" fill="#26231f"/>
<rect x="1088" y="438" width="2" height="48" fill="#26231f"/>
<rect x="1148" y="438" width="2" height="48" fill="#26231f"/>
<rect x="544" y="438" width="2" height="48" fill="#97a9c6"/>
<rect x="920" y="438" width="2" height="48" fill="#97a9c6"/>
<rect x="924" y="438" width="2" height="48" fill="#97a9c6"/>
<rect x="942" y="438" width="2" height="48" fill="#97a9c6"/>
<rect x="1090" y="438" width="2" height="48" fill="#97a9c6"/>
<rect x="1150" y="438" width="2" height="48" fill="#97a9c6"/>
<rect x="496.9" y="444.9" width="22.2" height="20.2" fill="#6b6b6b" stroke="#c2c2be" stroke-width="1.8"/><text x="500.5" y="459.7" font-family="Liberation Serif" font-size="16" font-style="italic" fill="#1e1e1e" textLength="15" lengthAdjust="spacingAndGlyphs">fx</text>
<rect x="564.9" y="444.9" width="22.2" height="20.2" fill="#6b6b6b" stroke="#c2c2be" stroke-width="1.8"/><text x="568.5" y="459.7" font-family="Liberation Serif" font-size="16" font-style="italic" fill="#1e1e1e" textLength="15" lengthAdjust="spacingAndGlyphs">fx</text>
<rect x="962.9" y="444.9" width="22.2" height="20.2" fill="#6b6b6b" stroke="#c2c2be" stroke-width="1.8"/><text x="966.5" y="459.7" font-family="Liberation Serif" font-size="16" font-style="italic" fill="#1e1e1e" textLength="15" lengthAdjust="spacingAndGlyphs">fx</text>
<rect x="1110.9" y="444.9" width="22.2" height="20.2" fill="#6b6b6b" stroke="#c2c2be" stroke-width="1.8"/><text x="1114.5" y="459.7" font-family="Liberation Serif" font-size="16" font-style="italic" fill="#1e1e1e" textLength="15" lengthAdjust="spacingAndGlyphs">fx</text>
<rect x="1170.9" y="444.9" width="22.2" height="20.2" fill="#6b6b6b" stroke="#c2c2be" stroke-width="1.8"/><text x="1174.5" y="459.7" font-family="Liberation Serif" font-size="16" font-style="italic" fill="#1e1e1e" textLength="15" lengthAdjust="spacingAndGlyphs">fx</text>
<rect x="478" y="438" width="798" height="48" fill="url(#hatch)"/>
<rect x="1278" y="438" width="14" height="48" fill="url(#hatch2)"/>
<rect x="474" y="146" width="2" height="576" fill="#2c2c2c"/>
<path d="M476 118 H488 V134 L480 142 H478 V136 H476 Z" fill="#4a90e2"/>
<rect x="476" y="136" width="2" height="6" fill="#000"/>
<rect x="476" y="142" width="2" height="580" fill="#4a90e2"/>
<rect x="1294" y="148" width="20" height="278" rx="10" fill="#282828"/>
<rect x="1294" y="165" width="20" height="251" fill="#303030"/>
<circle cx="1304" cy="165" r="11.6" fill="#1d1d1d" fill-opacity="0.75"/><circle cx="1304" cy="165" r="10.2" fill="#939393"/><circle cx="1304" cy="165" r="6" fill="#2d2d2d"/>
<circle cx="1304" cy="416" r="11.6" fill="#1d1d1d" fill-opacity="0.75"/><circle cx="1304" cy="416" r="10.2" fill="#939393"/><circle cx="1304" cy="416" r="6" fill="#2d2d2d"/>
<rect x="1294" y="440" width="20" height="282" rx="10" fill="#282828"/>
<rect x="1294" y="450" width="20" height="257" fill="#303030"/>
<circle cx="1304" cy="450" r="11.6" fill="#1d1d1d" fill-opacity="0.75"/><circle cx="1304" cy="450" r="10.2" fill="#939393"/><circle cx="1304" cy="450" r="6" fill="#2d2d2d"/>
<circle cx="1304" cy="707" r="11.6" fill="#1d1d1d" fill-opacity="0.75"/><circle cx="1304" cy="707" r="10.2" fill="#939393"/><circle cx="1304" cy="707" r="6" fill="#2d2d2d"/>
<rect x="28.5" y="724.5" width="1262" height="21" rx="10.5" fill="#1c1c1c" stroke="#363636" stroke-width="1.2"/>
<rect x="28" y="724" width="374" height="22" rx="11" fill="#333333"/>
<circle cx="39.5" cy="735" r="11.6" fill="#1d1d1d" fill-opacity="0.75"/><circle cx="39.5" cy="735" r="10.2" fill="#939393"/><circle cx="39.5" cy="735" r="6" fill="#2d2d2d"/>
<circle cx="391" cy="735" r="11.6" fill="#1d1d1d" fill-opacity="0.75"/><circle cx="391" cy="735" r="10.2" fill="#939393"/><circle cx="391" cy="735" r="6" fill="#2d2d2d"/>
</svg>
</body></html>
